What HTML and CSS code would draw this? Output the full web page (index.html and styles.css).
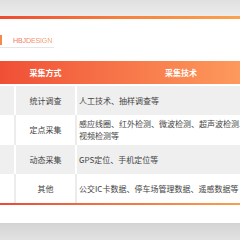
FILE: index.html
```html
<!DOCTYPE html>
<html lang="zh">
<head>
<meta charset="utf-8">
<link rel="stylesheet" href="styles.css">
</head>
<body>
<div class="page">
  <div class="topbar"></div>
  <div class="accent"></div>
  <div class="brand">
    <span class="mark"></span>
    <span class="brand-text">HBJDESIGN</span>
  </div>
  <div class="table">
    <div class="row head">
      <div class="cell"></div>
      <div class="cell c2">采集方式</div>
      <div class="cell c3">采集技术</div>
    </div>
    <div class="row gray">
      <div class="cell"></div>
      <div class="cell c2">统计调查</div>
      <div class="cell c3">人工技术、抽样调查等</div>
    </div>
    <div class="row white tall">
      <div class="cell"></div>
      <div class="cell c2">定点采集</div>
      <div class="cell c3">感应线圈、红外检测、微波检测、超声波检测、视频检测等</div>
    </div>
    <div class="row gray">
      <div class="cell"></div>
      <div class="cell c2">动态采集</div>
      <div class="cell c3">GPS定位、手机定位等</div>
    </div>
    <div class="row white">
      <div class="cell"></div>
      <div class="cell c2">其他</div>
      <div class="cell c3">公交IC卡数据、停车场管理数据、遥感数据等</div>
    </div>
    <div class="endline"></div>
  </div>
  <div class="spacer"></div>
  <div class="bottombar"></div>
</div>
</body>
</html>
```

FILE: styles.css
```css
html, body {
  margin: 0;
  padding: 0;
  background: #ffffff;
}
.page {
  width: 240px;
  height: 240px;
  overflow: hidden;
  display: flex;
  flex-direction: column;
  font-family: "Noto Sans CJK SC", "Noto Sans", sans-serif;
  color: #444444;
}
.topbar {
  height: 16px;
  flex: none;
  background: linear-gradient(#e0e0e0, #ececec);
}
.accent {
  height: 3px;
  flex: none;
  background: linear-gradient(90deg, #ef4a32, #f7803e 50%, #fba24f);
}
.brand {
  margin-top: 14px;
  width: 54px;
  height: 14px;
  flex: none;
  display: flex;
  align-items: center;
  border-bottom: 1px solid #e6e6e6;
}
.mark {
  width: 2px;
  height: 10px;
  background: #f6894a;
}
.brand-text {
  margin-left: 11px;
  font-family: "Liberation Sans", Arial, sans-serif;
  font-size: 7px;
  letter-spacing: -0.1px;
  color: #ef7a5a;
  background: linear-gradient(90deg, #eb6450, #f3a06a);
  -webkit-background-clip: text;
  background-clip: text;
  -webkit-text-fill-color: transparent;
}
.table {
  margin-top: 13px;
  margin-left: -26px;
  width: 311px;
  flex: none;
  display: flex;
  flex-direction: column;
  font-size: 8px;
  line-height: 12px;
}
.row {
  display: grid;
  grid-template-columns: 40px 59px 208px;
  column-gap: 2px;
  height: 29px;
}
.row.tall {
  height: 30px;
}
.cell {
  display: flex;
  align-items: center;
}
.c2 {
  justify-content: center;
  text-align: center;
}
.c3 {
  padding: 0 34px 0 2px;
}
.head {
  height: 23px;
  margin-bottom: 2px;
  background: linear-gradient(90deg, #ee4632 0%, #f56a43 35%, #fd9a5c 86%, #fea767 100%);
  color: #ffffff;
  font-weight: bold;
}
.head .c3 {
  justify-content: center;
  padding: 0;
}
.gray {
  background: #ffffff;
}
.gray .cell {
  background: #efefef;
}
.white {
  background: #ececec;
}
.white .cell {
  background: #ffffff;
}
.endline {
  height: 2px;
  background: linear-gradient(90deg, #e6403a 0%, #f06a40 35%, #f7a04e 86%, #f9ad55 100%);
}
.spacer {
  flex: 1;
}
.bottombar {
  height: 17px;
  flex: none;
  background: linear-gradient(#d4d4d4, #e2e2e2);
}
```
